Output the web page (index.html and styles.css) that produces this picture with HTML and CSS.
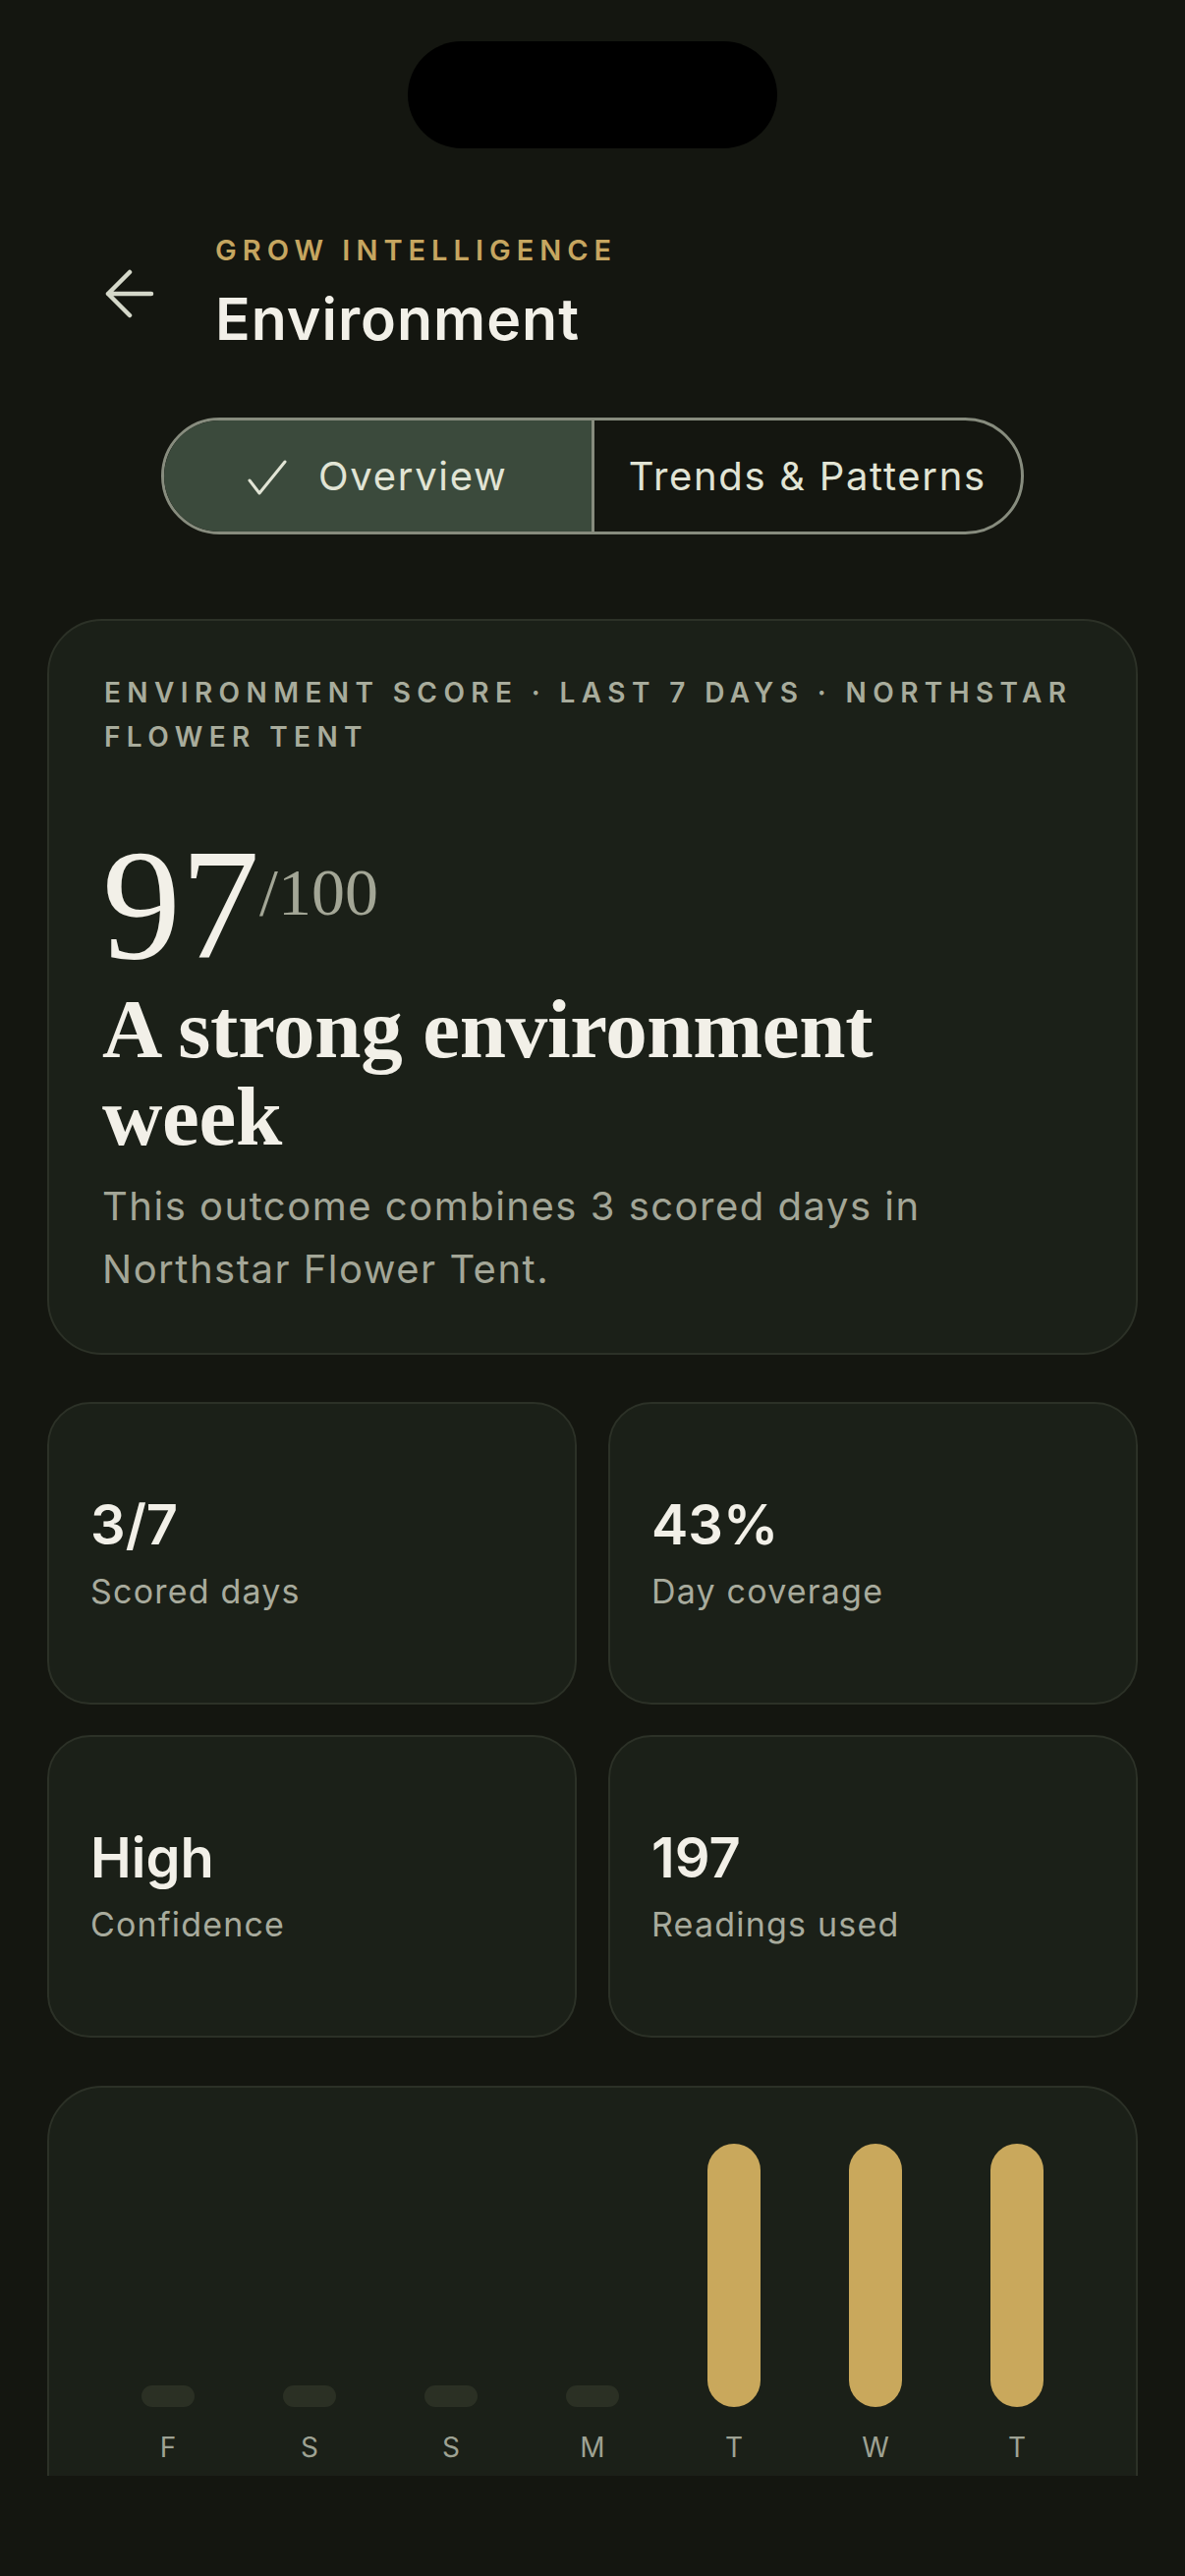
FILE: index.html
```html
<!DOCTYPE html>
<html lang="en">
<head>
<meta charset="utf-8">
<title>Environment</title>
<link rel="stylesheet" href="styles.css">
</head>
<body>
<div class="viewport">
  <div class="island"></div>

  <header class="header">
    <button class="back" aria-label="Back">
      <svg width="50" height="50" viewBox="0 0 50 50"><path d="M3 25 H47 M25 3 L3 25 L25 47" fill="none" stroke="#d5d8ca" stroke-width="4.5" stroke-linecap="round" stroke-linejoin="round"/></svg>
    </button>
    <div class="titles">
      <div class="eyebrow">GROW INTELLIGENCE</div>
      <h1 class="title">Environment</h1>
    </div>
  </header>

  <div class="seg-wrap">
    <div class="seg">
      <div class="seg-item active">
        <svg class="check" width="40" height="36" viewBox="0 0 40 36"><path d="M2 21 L12 34 L38 2" fill="none" stroke="#e1e4d5" stroke-width="3" stroke-linecap="round" stroke-linejoin="round"/></svg>
        <span>Overview</span>
      </div>
      <div class="seg-item">Trends &amp; Patterns</div>
    </div>
  </div>

  <section class="card hero">
    <div class="hero-label">ENVIRONMENT SCORE · LAST 7 DAYS · NORTHSTAR FLOWER TENT</div>
    <div class="score">97<span class="score-out">/100</span></div>
    <h2 class="headline">A strong environment week</h2>
    <p class="desc">This outcome combines 3 scored days in Northstar Flower Tent.</p>
  </section>

  <section class="stats">
    <div class="card stat"><div class="stat-value">3/7</div><div class="stat-label">Scored days</div></div>
    <div class="card stat"><div class="stat-value">43%</div><div class="stat-label">Day coverage</div></div>
    <div class="card stat"><div class="stat-value">High</div><div class="stat-label">Confidence</div></div>
    <div class="card stat"><div class="stat-value">197</div><div class="stat-label">Readings used</div></div>
  </section>

  <section class="card chart">
    <div class="bars">
      <div class="day"><div class="track"><div class="bar empty"></div></div><div class="day-label">F</div></div>
      <div class="day"><div class="track"><div class="bar empty"></div></div><div class="day-label">S</div></div>
      <div class="day"><div class="track"><div class="bar empty"></div></div><div class="day-label">S</div></div>
      <div class="day"><div class="track"><div class="bar empty"></div></div><div class="day-label">M</div></div>
      <div class="day"><div class="track"><div class="bar" style="height:268px"></div></div><div class="day-label">T</div></div>
      <div class="day"><div class="track"><div class="bar" style="height:268px"></div></div><div class="day-label">W</div></div>
      <div class="day"><div class="track"><div class="bar" style="height:268px"></div></div><div class="day-label">T</div></div>
    </div>
  </section>
</div>
</body>
</html>
```

FILE: styles.css
```css
html, body {
  margin: 0;
  padding: 0;
  background: #141610;
}

body {
  width: 1206px;
  height: 2622px;
  overflow: hidden;
  font-family: Inter, "Noto Sans", sans-serif;
  color: #f2f0e8;
}

.viewport {
  height: 2520px;
  overflow: hidden;
  padding: 42px 48px 0;
  box-sizing: border-box;
  display: flex;
  flex-direction: column;
}

.viewport > * {
  flex-shrink: 0;
}

.island {
  align-self: center;
  width: 376px;
  height: 109px;
  border-radius: 55px;
  background: #000;
}

.header {
  display: flex;
  align-items: center;
  gap: 62px;
  margin-top: 86px;
  padding-left: 59px;
}

.back {
  width: 50px;
  height: 50px;
  padding: 0;
  border: 0;
  background: none;
  display: flex;
}

.eyebrow {
  font-size: 29px;
  line-height: 36px;
  font-weight: 600;
  letter-spacing: 6px;
  color: #c6a660;
}

.title {
  margin: 17px 0 0;
  font-size: 59px;
  line-height: 70px;
  font-weight: 600;
  letter-spacing: 1px;
  color: #f2f0e8;
}

.seg-wrap {
  display: flex;
  justify-content: center;
  margin-top: 65px;
}

.seg {
  display: flex;
  width: 878px;
  height: 119px;
  box-sizing: border-box;
  border: 3px solid #878c7e;
  border-radius: 60px;
  overflow: hidden;
}

.seg-item {
  flex: 1;
  display: flex;
  align-items: center;
  justify-content: center;
  gap: 32px;
  font-size: 40px;
  letter-spacing: 1.7px;
  color: #e1e4d5;
}

.seg-item.active {
  background: #3b4a3c;
  border-right: 3px solid #878c7e;
}

.check {
  margin-top: 2px;
}

.card {
  background: #1b2018;
  border: 2px solid #2c3127;
  border-radius: 56px;
  box-sizing: border-box;
}

.hero {
  margin-top: 86px;
  padding: 51px 56px 53px 54px;
}

.hero-label {
  margin-left: 2px;
  font-size: 28px;
  line-height: 45px;
  font-weight: 600;
  letter-spacing: 6.4px;
  color: #a8ac9c;
}

.score {
  margin-top: 68px;
  font-family: "Liberation Serif", serif;
  font-size: 160px;
  line-height: 160px;
  color: #f2f0e8;
}

.score-out {
  font-size: 68px;
  line-height: 1;
  vertical-align: 44px;
  color: #a3a696;
}

.headline {
  max-width: 900px;
  margin: 2px 0 0;
  font-family: "Liberation Serif", serif;
  font-size: 85px;
  line-height: 89px;
  font-weight: 700;
  letter-spacing: -0.3px;
  color: #f2f0e8;
}

.desc {
  margin: 15px 0 0;
  font-size: 40px;
  line-height: 64px;
  letter-spacing: 1.5px;
  color: #a3a697;
}

.stats {
  margin-top: 48px;
  display: grid;
  grid-template-columns: 1fr 1fr;
  gap: 31px 32px;
}

.stat {
  height: 308px;
  padding: 0 42px;
  border-radius: 44px;
  display: flex;
  flex-direction: column;
  justify-content: center;
}

.stat-value {
  font-size: 56px;
  line-height: 64px;
  font-weight: 600;
  color: #f2f0e8;
}

.stat-label {
  margin-top: 14px;
  font-size: 34px;
  line-height: 44px;
  letter-spacing: 1.2px;
  color: #a8ab9d;
}

.chart {
  margin-top: 49px;
  padding: 57px 49px 80px;
}

.bars {
  display: grid;
  grid-template-columns: repeat(7, 1fr);
}

.day {
  display: flex;
  flex-direction: column;
  align-items: center;
}

.track {
  height: 268px;
  display: flex;
  align-items: flex-end;
}

.bar {
  width: 54px;
  border-radius: 27px;
  background: #c9a85c;
}

.bar.empty {
  height: 22px;
  border-radius: 11px;
  background: #2b3024;
}

.day-label {
  margin-top: 23px;
  font-size: 28px;
  line-height: 36px;
  color: #9ea293;
}
```
